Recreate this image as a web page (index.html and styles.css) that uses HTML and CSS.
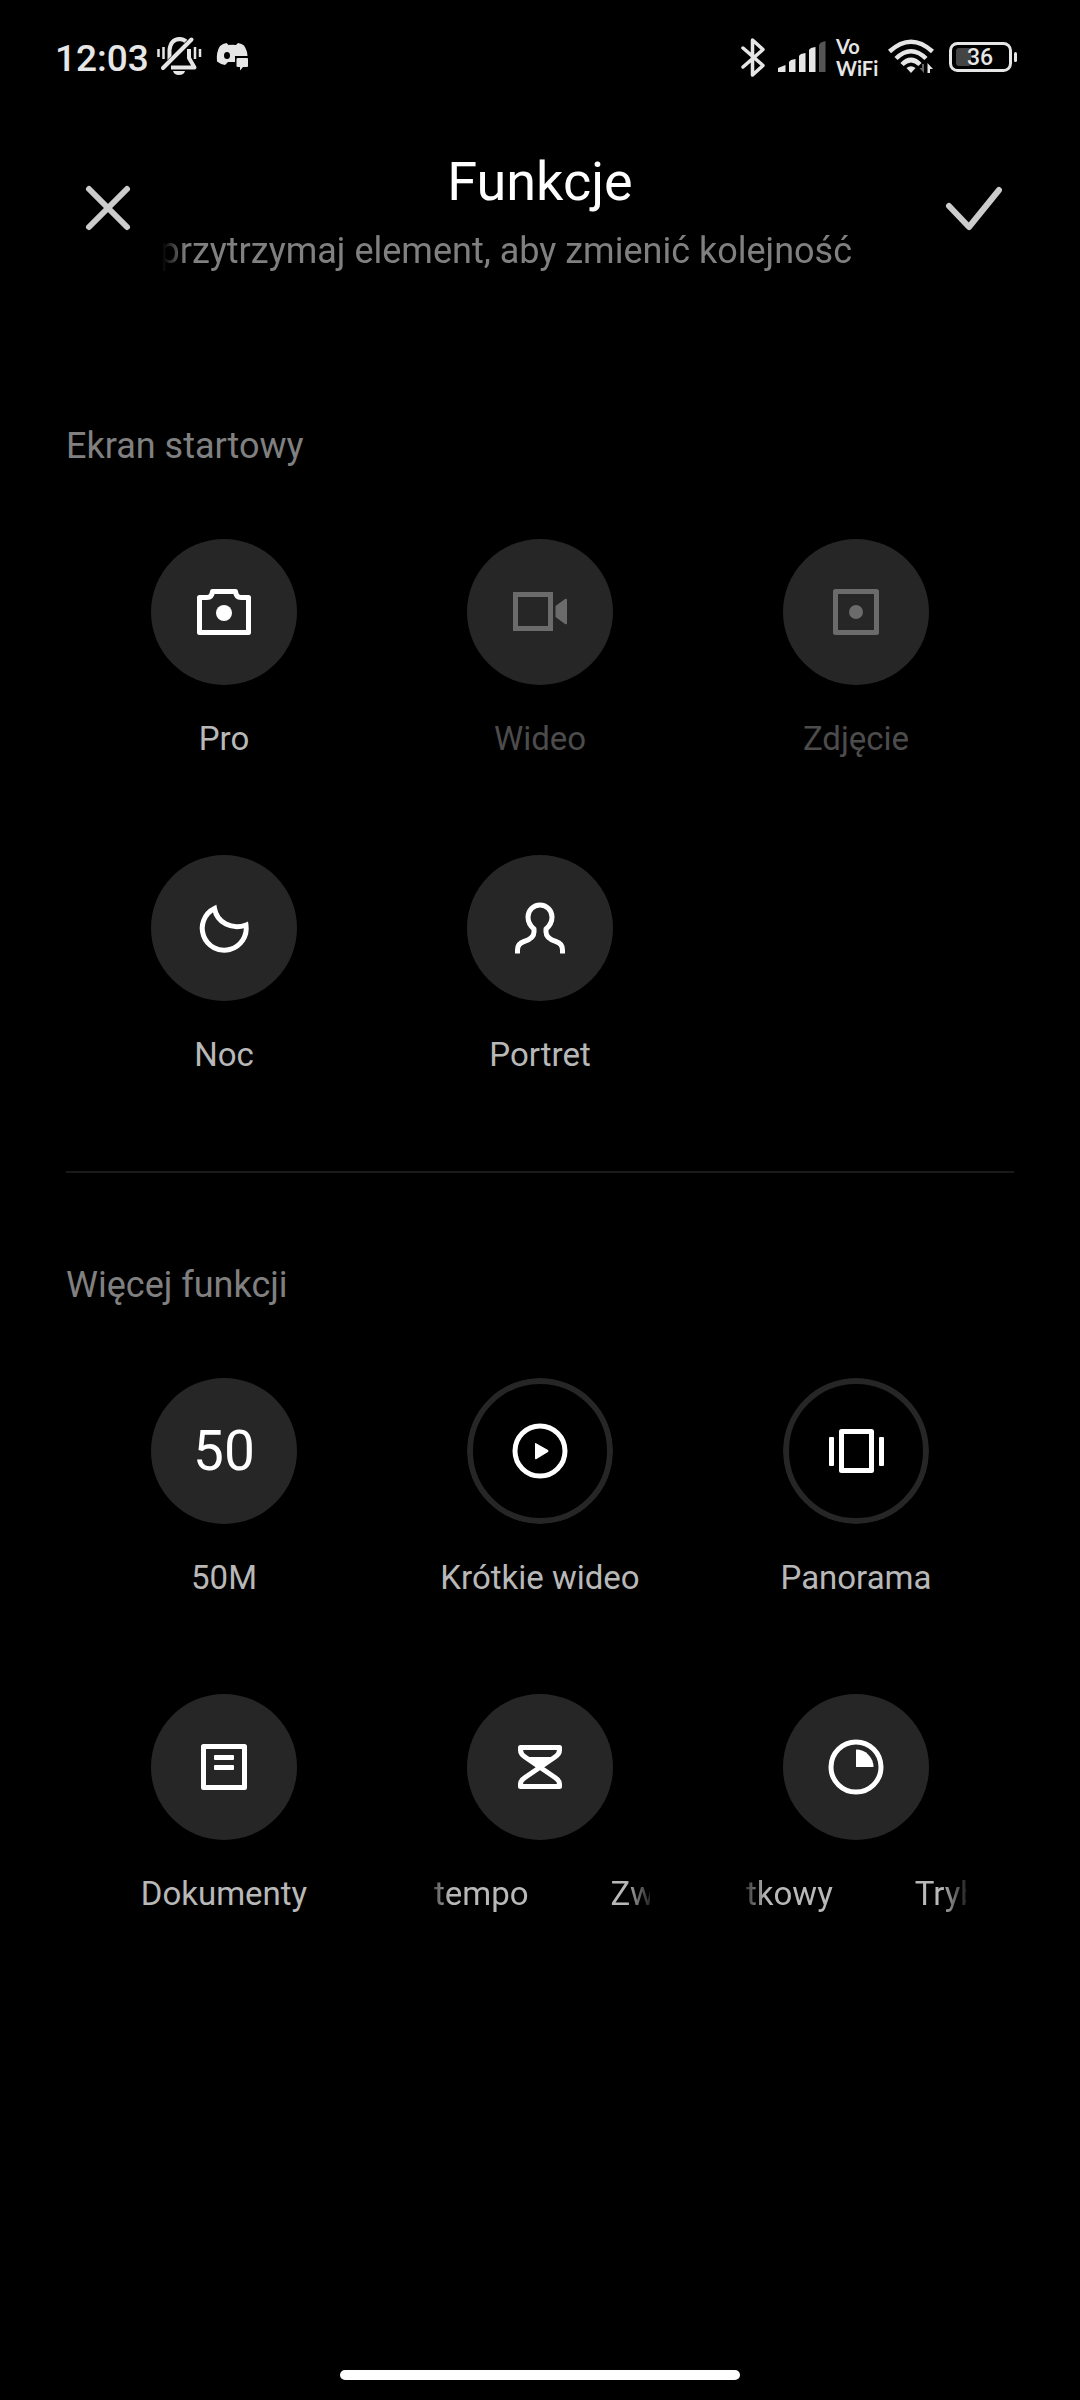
FILE: index.html
```html
<!DOCTYPE html>
<html lang="pl">
<head>
<meta charset="utf-8">
<meta name="viewport" content="width=device-width, initial-scale=1">
<title>Funkcje</title>
<link rel="stylesheet" href="styles.css">
</head>
<body>
<div class="screen">
  <div class="status">
    <div class="status-group start">
      <span class="clock">12:03</span>
      <svg width="51" height="42" viewBox="0 0 51 42" fill="none" stroke="#e6e6e6" stroke-width="4" aria-hidden="true">
        <path d="M12.500 25V14Q13.500 3.500 22.500 3Q27 3 30 6.500M32 13V22L37.500 31.500H14" stroke-linejoin="round"/>
        <path d="M3.500 34L33 4" stroke="#000" stroke-width="4"/>
        <path d="M6 32L34.500 3.500" stroke-linecap="round"/>
        <path d="M1.500 13V21M6.500 11V23M38 11V23M43 13V21" stroke-width="2.500"/>
        <path d="M16 35H28Q27 39 22 39T16 35Z" fill="#e6e6e6" stroke="none"/>
      </svg>
      <svg width="33" height="30" viewBox="0 0 33 30" fill="#e6e6e6" aria-hidden="true">
        <path fill-rule="evenodd" d="M10.500 1L12.500 3Q16 2.500 20 3L22 1Q26 1.500 28 3.500Q31.500 9 31.500 14H19V20H12L9 23Q4 22 1 19.500Q0 10 4 4Q7 1.500 10.500 1ZM11 10A3 3.500 0 1 0 11 17A3 3.500 0 0 0 11 10Z"/>
        <path d="M22 16H31Q32 16 32 17V24Q32 25 31 25H27L24 28.500V25H22Q20.500 25 20.500 24V17Q20.500 16 22 16Z"/>
      </svg>
    </div>
    <div class="status-group">
      <svg width="28" height="39" viewBox="0 0 28 39" fill="none" stroke="#e6e6e6" stroke-width="3.500" stroke-linecap="round" stroke-linejoin="round" aria-hidden="true">
        <path d="M3 10L23 27.500L12.500 37V2L23 11.500L3 29"/>
      </svg>
      <svg width="48" height="32" viewBox="0 0 48 32" fill="#e6e6e6" aria-hidden="true">
        <path d="M0 27L7.500 24V31H0ZM11 21Q12 18.500 17.500 18V31H11ZM21 15Q22 12.500 27.500 12V31H21ZM31 9Q32 6.500 37.500 6V31H31Z"/>
        <path d="M41 4Q42 1 47.500 0V31H41Z" fill="#555"/>
      </svg>
      <span class="carrier">Vo<br>WiFi</span>
      <svg width="52" height="36" viewBox="0 0 52 36" fill="none" stroke="#e6e6e6" stroke-width="4.500" aria-hidden="true">
        <path d="M2.500 12.500Q24 -7 45.500 12.500M9 19.500Q24 5 39 19.500M15 25.500Q24 16.500 33 25.500"/>
        <path d="M19.500 29Q24 25.500 28.500 29L24 34Z" fill="#e6e6e6" stroke="none"/>
        <path d="M37 25V34L32.500 29H35V25Z" fill="#666" stroke="none"/>
        <path d="M40.500 34V24L46 30H43V34Z" fill="#e6e6e6" stroke="none"/>
      </svg>
      <svg class="battery" width="69" height="30" viewBox="0 0 69 30" role="img" aria-label="36">
        <rect x="1.500" y="1.500" width="60" height="27" rx="7" fill="none" stroke="#e6e6e6" stroke-width="3"/>
        <rect x="7" y="6" width="15" height="18" rx="3" fill="#444"/>
        <rect x="65" y="10" width="3" height="10" rx="1.500" fill="#e6e6e6"/>
        <text x="31" y="23" text-anchor="middle">36</text>
      </svg>
    </div>
  </div>

  <header class="header">
    <button class="action" type="button" aria-label="Zamknij">
      <svg width="60" height="60" viewBox="0 0 60 60"><path d="M11 11L49 49M49 11L11 49"/></svg>
    </button>
    <div class="titles">
      <h1>Funkcje</h1>
      <p class="hint"><span>przytrzymaj element, aby zmienić kolejność</span></p>
    </div>
    <button class="action" type="button" aria-label="Gotowe">
      <svg width="60" height="60" viewBox="0 0 60 60"><path d="M7 28L27 49L57 12"/></svg>
    </button>
  </header>

  <main>
    <section class="group">
      <h2>Ekran startowy</h2>
      <div class="grid">
        <button class="tile" type="button">
          <svg class="disc" viewBox="0 0 146 146"><path d="M48.500 58.500H56Q61 58.500 61.500 52.500H84.500Q85 58.500 90 58.500H97.500V93.500H48.500Z"/><circle class="solid" cx="73" cy="74" r="8"/></svg>
          <span class="label">Pro</span>
        </button>
        <button class="tile" type="button" disabled>
          <svg class="disc" viewBox="0 0 146 146"><path class="sharp" d="M48.500 55.500H83.500V89.500H48.500Z"/><path class="solid" d="M88.500 67L98 60Q100 59 100 61V84Q100 86 98 85L88.500 78Z"/></svg>
          <span class="label">Wideo</span>
        </button>
        <button class="tile" type="button" disabled>
          <svg class="disc" viewBox="0 0 146 146"><path d="M52.500 52.500H93.500V93.500H52.500Z"/><circle class="solid" cx="73" cy="73" r="7"/></svg>
          <span class="label">Zdjęcie</span>
        </button>
        <button class="tile" type="button">
          <svg class="disc" viewBox="0 0 146 146"><path class="sharp" d="M63.500 53.500A22 22 0 1 0 95 70C81 75 66 68 63.500 53.500Z"/></svg>
          <span class="label">Noc</span>
        </button>
        <button class="tile" type="button">
          <svg class="disc" viewBox="0 0 146 146"><path d="M50.500 98.500V95Q50.500 88.500 57 86.500Q67 83.500 67 77V74Q61 69 61 62A12 12 0 0 1 85 62Q85 69 79 74V77Q79 83.500 89 86.500Q95.500 88.500 95.500 95V98.500"/></svg>
          <span class="label">Portret</span>
        </button>
      </div>
    </section>

    <hr>

    <section class="group more">
      <h2>Więcej funkcji</h2>
      <div class="grid">
        <button class="tile" type="button">
          <span class="disc number">50</span>
          <span class="label">50M</span>
        </button>
        <button class="tile" type="button">
          <svg class="disc ring" viewBox="0 0 146 146"><circle class="edge" cx="73" cy="73" r="70"/><circle cx="73" cy="73" r="25"/><path class="solid" d="M68 66Q68 64.500 69.500 65.500L81 72Q82 73 81 74L69.500 81Q68 82 68 80Z"/></svg>
          <span class="label">Krótkie wideo</span>
        </button>
        <button class="tile" type="button">
          <svg class="disc ring" viewBox="0 0 146 146"><circle class="edge" cx="73" cy="73" r="70"/><path d="M58.500 53.500H88.500V92.500H58.500Z"/><rect class="solid" x="46" y="59" width="5" height="29" rx="1"/><rect class="solid" x="96" y="59" width="5" height="29" rx="1"/></svg>
          <span class="label">Panorama</span>
        </button>
        <button class="tile" type="button">
          <svg class="disc" viewBox="0 0 146 146"><path d="M52.500 52.500H93.500V93.500H52.500Z"/><rect class="solid" x="63" y="61" width="20" height="5" rx="1"/><rect class="solid" x="63" y="71" width="20" height="5" rx="1"/></svg>
          <span class="label">Dokumenty</span>
        </button>
        <button class="tile" type="button">
          <svg class="disc" viewBox="0 0 146 146"><path d="M53.500 53.500H92.500V56Q92.500 60 88 63L58 83.500Q53.500 86.500 53.500 90V92.500H92.500V90Q92.500 86.500 88 83.500L58 63Q53.500 60 53.500 56Z"/><path class="solid" d="M59 63H87L73 74Z"/></svg>
          <span class="label marquee inset"><span>tempo</span><span>Zw</span></span>
        </button>
        <button class="tile" type="button">
          <svg class="disc" viewBox="0 0 146 146"><circle cx="73" cy="73" r="25"/><path class="solid" d="M73 73V55.500A17.500 17.500 0 0 1 90.500 73Z"/></svg>
          <span class="label marquee"><span>tkowy</span><span>Tryb</span></span>
        </button>
      </div>
    </section>
  </main>

  <div class="home-bar"></div>
</div>
</body>
</html>
```

FILE: styles.css
```css
* {
  box-sizing: border-box;
}

body {
  margin: 0;
  background: #000;
  color: #fff;
  font-family: Roboto, "Noto Sans", sans-serif;
}

h1, h2, p {
  margin: 0;
  font-weight: 400;
}

button {
  padding: 0;
  border: 0;
  background: none;
  color: inherit;
  font: inherit;
}

.screen {
  display: flex;
  flex-direction: column;
  min-height: 100vh;
}

/* Status bar */
.status {
  display: flex;
  justify-content: space-between;
  height: 118px;
  padding: 0 62px 4px 55px;
}

.status-group {
  display: flex;
  align-items: center;
  gap: 10px;
}

.status-group.start {
  gap: 8px;
}

.clock {
  color: #e6e6e6;
  font-size: 37px;
  font-weight: 500;
  line-height: 44px;
  padding-top: 4px;
}

.carrier {
  width: 41px;
  color: #e6e6e6;
  font-family: Lato, sans-serif;
  font-size: 20px;
  font-weight: 700;
  line-height: 22px;
  white-space: nowrap;
}

.battery text {
  fill: #e6e6e6;
  font-size: 23px;
  font-weight: 500;
}

/* Header */
.header {
  display: flex;
  align-items: flex-start;
  padding: 32px 62px 0;
}

.action {
  display: grid;
  place-items: center;
  flex: none;
  width: 92px;
  height: 116px;
}

.action path {
  fill: none;
  stroke: #ccc;
  stroke-width: 6;
  stroke-linecap: round;
  stroke-linejoin: round;
}

.titles {
  flex: 1;
  min-width: 0;
  text-align: center;
}

h1 {
  font-size: 54px;
  line-height: 64px;
}

.hint {
  display: flex;
  justify-content: flex-end;
  margin-top: 16px;
  padding-right: 74px;
  overflow: hidden;
  color: #808080;
  font-size: 36px;
  line-height: 42px;
  white-space: nowrap;
  mask-image: linear-gradient(to right, transparent 8px, #000 32px);
}

/* Mode groups */
main {
  padding: 153px 66px 0;
}

h2 {
  color: #808080;
  font-size: 36px;
  line-height: 42px;
}

.grid {
  display: grid;
  grid-template-columns: repeat(3, 1fr);
  row-gap: 96px;
  margin-top: 72px;
}

hr {
  height: 2px;
  margin: 96px 0 91px;
  border: 0;
  background: #1a1a1a;
}

.tile {
  display: flex;
  flex-direction: column;
  align-items: center;
  gap: 34px;
  color: #fff;
}

.disc {
  width: 146px;
  height: 146px;
  border-radius: 50%;
  background: #262626;
  fill: none;
  stroke: currentColor;
  stroke-width: 5;
  stroke-linejoin: round;
}

.disc .sharp {
  stroke-linejoin: miter;
}

.disc .solid {
  fill: currentColor;
  stroke: none;
}

.disc.ring {
  background: none;
}

.disc .edge {
  stroke: #262626;
  stroke-width: 6;
}

.number {
  font-size: 55px;
  line-height: 146px;
  text-align: center;
}

.label {
  color: #b8b8b8;
  font-size: 33px;
  line-height: 40px;
  white-space: nowrap;
}

.tile:disabled {
  color: #6b6b6b;
}

.tile:disabled .label {
  color: #4c4c4c;
}

.marquee {
  display: flex;
  gap: 82px;
  width: 220px;
  overflow: hidden;
  mask-image: linear-gradient(to right, rgb(0 0 0 / 0.3), #000 20px, #000 196px, rgb(0 0 0 / 0.2));
}

.marquee span {
  flex: none;
}

.marquee.inset {
  padding-left: 4px;
}

/* Gesture handle */
.home-bar {
  width: 37%;
  height: 10px;
  margin: auto auto 20px;
  border-radius: 5px;
  background: #fff;
}
```
